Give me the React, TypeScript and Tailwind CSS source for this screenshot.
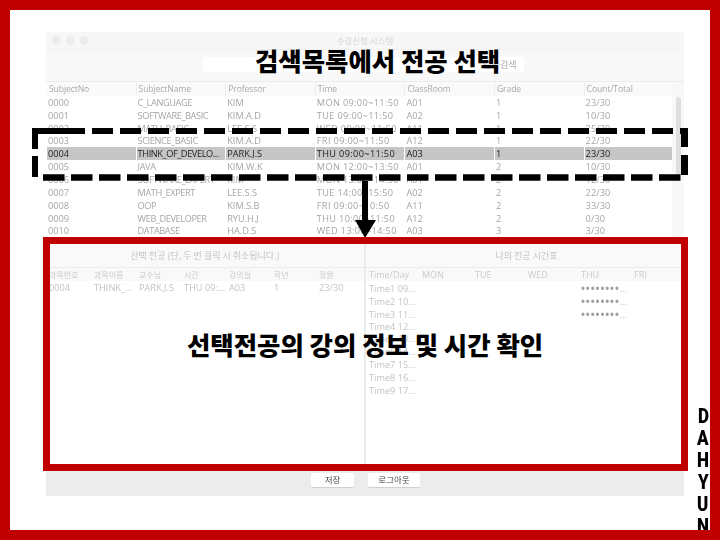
const rows = [
  ["0000", "C_LANGUAGE", "KIM", "MON 09:00~11:50", "A01", "1", "23/30"],
  ["0001", "SOFTWARE_BASIC", "KIM.A.D", "TUE 09:00~11:50", "A02", "1", "10/30"],
  ["0002", "MATH_BASIC", "LEE.S.S", "WED 09:00~11:50", "A11", "1", "25/30"],
  ["0003", "SCIENCE_BASIC", "KIM.A.D", "FRI 09:00~11:50", "A12", "1", "22/30"],
  ["0004", "THINK_OF_DEVELO...", "PARK.J.S", "THU 09:00~11:50", "A03", "1", "23/30"],
  ["0005", "JAVA", "KIM.W.K", "MON 12:00~13:50", "A01", "2", "10/30"],
  ["0006", "SOFTWARE_EXPERT", "KIM", "MON 13:00~14:50", "A01", "2", "12/30"],
  ["0007", "MATH_EXPERT", "LEE.S.S", "TUE 14:00~15:50", "A02", "2", "22/30"],
  ["0008", "OOP", "KIM.S.B", "FRI 09:00~10:50", "A11", "2", "33/30"],
  ["0009", "WEB_DEVELOPER", "RYU.H.J", "THU 10:00~11:50", "A12", "2", "0/30"],
  ["0010", "DATABASE", "HA.D.S", "WED 13:00~14:50", "A03", "3", "3/30"],
];
const heads = ["SubjectNo", "SubjectName", "Professor", "Time", "ClassRoom", "Grade", "Count/Total"];
const subHeads = ["과목번호", "과목이름", "교수님", "시간", "강의실", "학년", "정원"];
const picked = ["0004", "THINK_...", "PARK.J.S", "THU 09:...", "A03", "1", "23/30"];
const days = ["Time/Day", "MON", "TUE", "WED", "THU", "FRI"];
const times = ["Time1 09...", "Time2 10...", "Time3 11...", "Time4 12...", "Time5 13...", "Time6 14...", "Time7 15...", "Time8 16...", "Time9 17..."];
const sans = "font-['Open_Sans','Noto_Sans_CJK_KR',sans-serif]";
const kr = "font-['Noto_Sans_CJK_KR',sans-serif]";
const colTrack = ["", "tracking-[-0.4px]", "", "tracking-[0.35px]", "", "", "tracking-[0.1px]"];

function Dot() {
  return <span className="w-[9px] h-[9px] rounded-full bg-[#ececec]" />;
}

export default function App() {
  return (
    <div className="relative w-[720px] h-[540px] overflow-hidden border-[10px] border-[#c00000] bg-white">
      <div className={`ml-[36px] mt-[22px] w-[638px] h-[464px] flex flex-col bg-[#f8f8f8] blur-[0.35px] ${sans}`}>
        <div className="h-[18px] relative flex items-center gap-[5px] pl-[6px] bg-[#f7f7f7] border-b border-[#f0f0f0]">
          <Dot /><Dot /><Dot />
          <div className={`absolute inset-0 flex items-center justify-center text-[8.5px] text-[#d4d4d4] ${kr}`}>수강신청 시스템</div>
        </div>
        <div className="h-[32px] flex items-center border-b border-[#ececec] pb-[2px]">
          <div className="ml-[157px] w-[275px] h-[15px] bg-white" />
          <div className={`ml-[-2px] w-[48px] h-[15px] bg-white rounded-[2px] flex items-center justify-center text-[9px] text-[#aaaaaa] ${kr}`}>전공검색</div>
        </div>
        <div className="flex h-[156px] bg-white">
          <div className="w-[626px] text-[9.2px] leading-none pl-[1px]">
            <div className="grid grid-cols-[repeat(7,89.6px)] h-[14px] bg-[#fafafa] text-[8.6px] tracking-[-0.1px] text-[#aaaaaa]">
              {heads.map((h) => (
                <div key={h} className="flex items-center pl-[2px] border-r border-[#eeeeee]">{h}</div>
              ))}
            </div>
            {rows.map((r) => {
              const sel = r[0] === "0004";
              return (
                <div key={r[0]} className="grid grid-cols-[repeat(7,89.6px)] h-[12.87px]">
                  {r.map((c, i) => (
                    <div key={i} className={`flex items-center pl-[1px] mr-[1px] whitespace-nowrap overflow-hidden ${colTrack[i]} ${sel ? "bg-[#c6c6c6] text-[#222222]" : "text-[#a6a6a6]"}`}>{c}</div>
                  ))}
                </div>
              );
            })}
          </div>
          <div className="w-[12px] bg-[#f8f8f8] pl-[4px] pt-[15px]">
            <div className="w-[5px] h-[78px] rounded-full bg-[#dfdfdf]" />
          </div>
        </div>
        <div className="flex-1 flex bg-white min-h-0">
          <div className="w-[320px] flex flex-col border-r-2 border-[#ebebeb]">
            <div className={`h-[30px] pt-[7px] flex items-center justify-center text-[9px] text-[#c4c4c4] bg-[#f9f9f9] border-b border-[#ececec] ${kr}`}>선택 전공 (단, 두 번 클릭 시 취소됩니다.)</div>
            <div className={`grid grid-cols-[repeat(7,45px)] h-[13px] pl-[3px] bg-[#f9f9f9] text-[8px] text-[#cccccc] ${kr}`}>
              {subHeads.map((h) => (
                <div key={h} className="flex items-center">{h}</div>
              ))}
            </div>
            <div className="grid grid-cols-[repeat(7,45px)] h-[13px] pl-[3px] text-[9.2px] text-[#c4c4c4] whitespace-nowrap">
              {picked.map((c, i) => (
                <div key={i} className="flex items-center">{c}</div>
              ))}
            </div>
          </div>
          <div className="flex-1 flex flex-col">
            <div className={`h-[30px] pt-[7px] flex items-center justify-center text-[9px] text-[#c4c4c4] bg-[#f9f9f9] border-b border-[#ececec] ${kr}`}>나의 전공 시간표</div>
            <div className="grid grid-cols-[repeat(6,53px)] h-[13px] pl-[3px] bg-[#f9f9f9] text-[9px] text-[#cccccc]">
              {days.map((h) => (
                <div key={h} className="flex items-center">{h}</div>
              ))}
            </div>
            {times.map((t, i) => (
              <div key={t} className="grid grid-cols-[repeat(6,53px)] h-[12.87px] pl-[3px] text-[9.2px] text-[#c4c4c4]">
                <div className="flex items-center col-span-4">{t}</div>
                {i < 3 && (
                  <div className="flex items-center whitespace-nowrap text-[#a0a0a0]">
                    <span className="tracking-[0.9px] text-[10.5px] font-bold">••••••••</span>
                    <span className="text-[#c4c4c4]">...</span>
                  </div>
                )}
              </div>
            ))}
          </div>
        </div>
        <div className={`h-[25px] flex items-center justify-center gap-[14px] bg-[#ececec] pb-[7px] text-[8.5px] text-[#444444] ${kr}`}>
          <div className="ml-[1px] w-[43px] h-[15px] bg-white rounded-[2px] border-b border-[#d0d0d0] flex items-center justify-center">저장</div>
          <div className="w-[52px] h-[15px] bg-white rounded-[2px] border-b border-[#d0d0d0] flex items-center justify-center">로그아웃</div>
        </div>
      </div>

      <svg className="absolute left-[-10px] top-[-10px] pointer-events-none" width="720" height="540">
        <path d="M35 177V156M35 149V131H85" fill="none" stroke="#000" strokeWidth="6" />
        <path d="M92 131H685" fill="none" stroke="#000" strokeWidth="6" strokeDasharray="21 7" />
        <path d="M43 177.5H681" fill="none" stroke="#000" strokeWidth="6.5" strokeDasharray="21.5 6.5" />
        <path d="M684.5 128V147M684.5 155V175" fill="none" stroke="#000" strokeWidth="7" />
        <path d="M362 181H368V220H376L365 238L355 220H362Z" fill="#000" />
      </svg>

      <div className="absolute left-[33px] top-[227px] w-[645px] h-[234px] border-[7px] border-[#c00000] pointer-events-none" />

      <div className={`absolute left-[245px] top-[37px] text-[25.4px] leading-[26px] font-black text-black whitespace-nowrap ${kr}`}>검색목록에서 전공 선택</div>
      <div className={`absolute left-[177px] top-[320px] text-[25.4px] leading-[28px] font-black text-black whitespace-nowrap ${kr}`}>선택전공의 강의 정보 및 시간 확인</div>

      <div className="absolute left-[685px] top-[395px] w-[16px] flex flex-col items-center text-[20px] leading-[22px] font-black text-black font-['Roboto',sans-serif]">
        {"DAHYUN".split("").map((ch, i) => (
          <span key={i} className="scale-x-[0.85]">{ch}</span>
        ))}
      </div>
    </div>
  );
}
